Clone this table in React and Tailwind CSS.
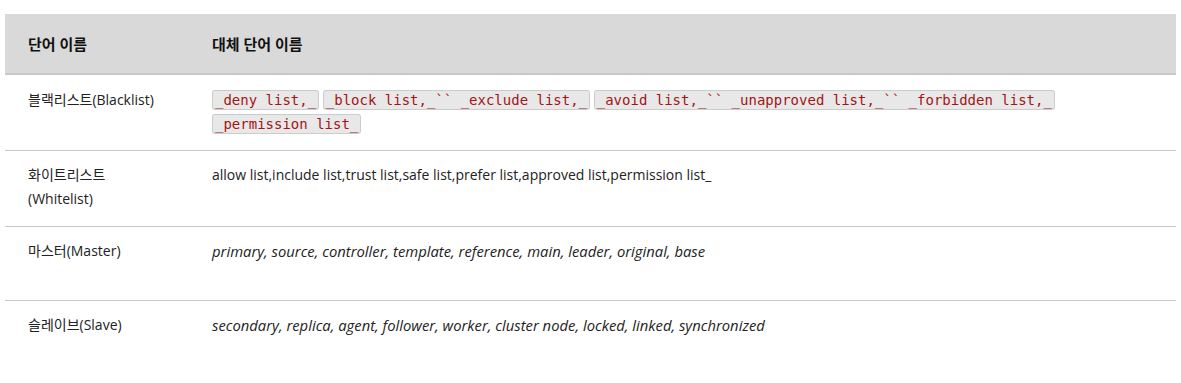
import React from "react";

const code = "rounded-[3px] border border-[#cccccc] bg-[#e8e8e8] px-[2px] py-[1px] text-[#a31515] text-[14px]";

function Code({ children }) {
  return (
    <code className={code} style={{ fontFamily: '"DejaVu Sans Mono", "Liberation Mono", monospace' }}>
      {children}
    </code>
  );
}

export default function App() {
  const font = { fontFamily: '"Open Sans", "Noto Sans CJK KR", sans-serif' };
  return (
    <div className="bg-white min-h-[383px] pt-[14px] px-[5px]" style={font}>
      <table className="w-[1171px] border-collapse text-[14px] leading-[24px] text-[#222]">
        <thead>
          <tr className="bg-[#d9d9d9] border-b-2 border-[#c8c8c8]">
            <th className="w-[184px] h-[60px] px-[23px] text-left font-bold text-[15px] text-[#111]">단어 이름</th>
            <th className="px-[23px] text-left font-bold text-[15px] text-[#111]">대체 단어 이름</th>
          </tr>
        </thead>
        <tbody>
          <tr className="border-b border-[#c8c8c8]">
            <td className="align-top px-[23px] pt-[13px] pb-[13px]">블랙리스트(Blacklist)</td>
            <td className="align-top pl-[23px] pr-[100px] pt-[13px] pb-[14px]">
              <Code>_deny list,_</Code> <Code>_block list,_`` _exclude list,_</Code>{" "}
              <Code>_avoid list,_`` _unapproved list,_`` _forbidden list,_</Code>{" "}
              <Code>_permission list_</Code>
            </td>
          </tr>
          <tr className="border-b border-[#c8c8c8]">
            <td className="align-top px-[23px] pt-[12px] pb-[15px]">
              화이트리스트
              <br />
              (Whitelist)
            </td>
            <td className="align-top px-[23px] pt-[12px] pb-[15px]">
              allow list,include list,trust list,safe list,prefer list,approved list,permission list_
            </td>
          </tr>
          <tr className="border-b border-[#c8c8c8]">
            <td className="align-top h-[74px] px-[23px] pt-[12px]">마스터(Master)</td>
            <td className="align-top px-[23px] pt-[12px] italic text-[14.8px]">
              primary, source, controller, template, reference, main, leader, original, base
            </td>
          </tr>
          <tr>
            <td className="align-top px-[23px] pt-[12px] pb-[13px]">슬레이브(Slave)</td>
            <td className="align-top px-[23px] pt-[12px] pb-[13px] italic text-[14.8px]">
              secondary, replica, agent, follower, worker, cluster node, locked, linked, synchronized
            </td>
          </tr>
        </tbody>
      </table>
    </div>
  );
}
